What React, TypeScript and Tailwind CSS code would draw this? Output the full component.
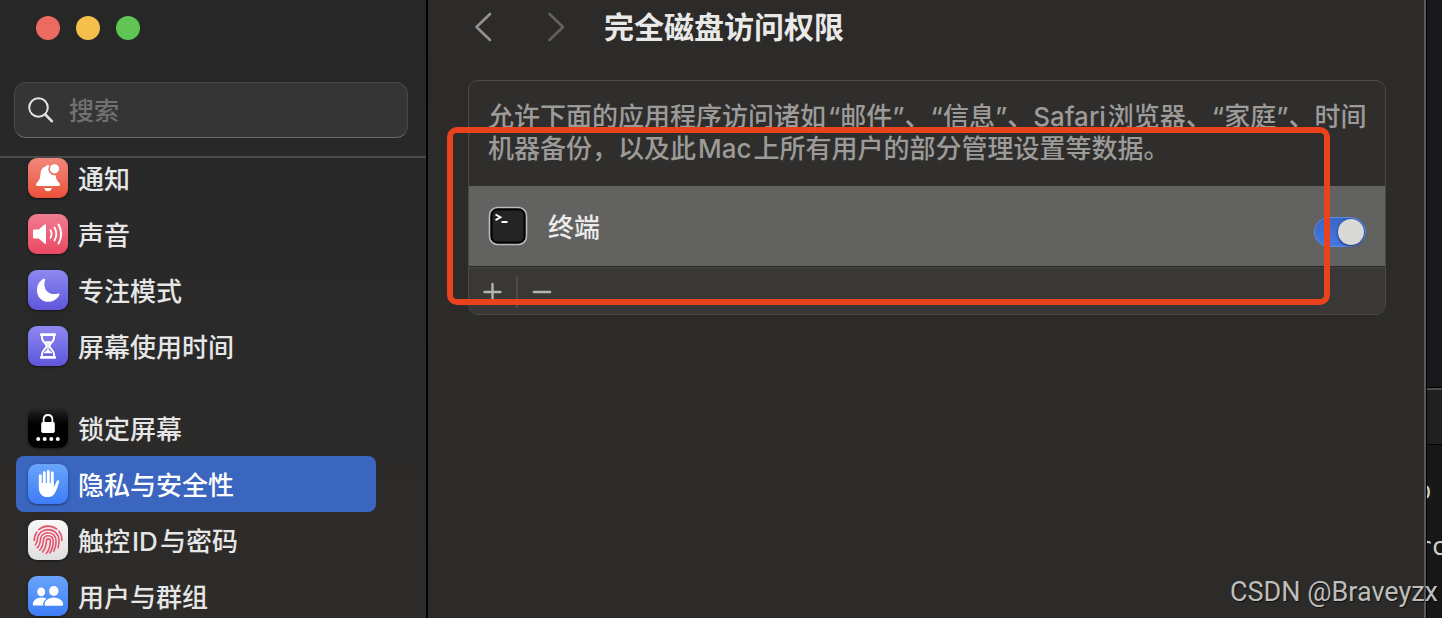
import { useState, type ReactNode } from "react";

type Item = { label: ReactNode; tile: string; icon: ReactNode; active?: boolean };

const BellIcon = () => (
  <svg viewBox="0 0 40 40" className="size-10" fill="white">
    <path d="M20 7c-.9 0-1.600.4-2 1.200-3.300.9-5.300 3.600-5.500 7.300-.2 4.500-.9 6.300-3.400 9-.7.8-1.100 1.400-1.100 2.100 0 .9.700 1.400 1.600 1.400h20.800c.9 0 1.600-.5 1.600-1.400 0-.7-.4-1.300-1.100-2.100-2.100-2.300-3-4-3.300-7.300a6.300 6.300 0 0 1-6.300-9.500A3 3 0 0 0 20 7z" />
    <path d="M16.200 30h7.600c-.3 2-1.800 3.300-3.800 3.300s-3.500-1.300-3.800-3.300z" />
    <circle cx="26.500" cy="10.800" r="4.600" />
  </svg>
);

const SpeakerIcon = () => (
  <svg viewBox="0 0 40 40" className="size-10" fill="none" stroke="white" strokeLinecap="round">
    <path
      d="M6.200 15.500h4.500l5.800-5c.8-.7 1.500-.3 1.500.6v17.800c0 .9-.7 1.300-1.500.6l-5.800-5H6.200c-.7 0-1.200-.5-1.200-1.200v-6.600c0-.7.5-1.200 1.200-1.200z"
      fill="white"
      stroke="none"
    />
    <path d="M22.500 16.200c1.300 2.300 1.300 5.300 0 7.600" strokeWidth="1.800" />
    <path d="M26.500 13.500c2.300 4 2.300 9 0 13" strokeWidth="1.900" />
    <path d="M30.500 10.500c3.500 5.700 3.500 13.300 0 19" strokeWidth="2" />
  </svg>
);

const MoonIcon = () => (
  <svg viewBox="0 0 40 40" className="size-10" fill="white">
    <path d="M15.800 8.800c.9-.4 1.600.2 1.300 1.200-.5 1.400-.7 2.700-.7 4.200 0 6 4 9.900 10 9.900 1.300 0 2.600-.2 3.800-.6 1-.3 1.600.4 1.200 1.300-1.900 4.300-6 7-11 7C13.800 31.800 9 27 9 20.200c0-5 2.600-9.400 6.800-11.400z" />
  </svg>
);

const HourglassIcon = () => (
  <svg viewBox="0 0 40 40" className="size-10" fill="none" stroke="white">
    <path d="M13.200 8.600h13.600M13.200 31.400h13.600" strokeWidth="2.800" strokeLinecap="round" />
    <path
      d="M14 9v3.200c0 3.300 4.600 5.200 4.600 7.800s-4.600 4.500-4.600 7.800V31h12v-3.200c0-3.300-4.600-5.200-4.600-7.800s4.600-4.500 4.600-7.800V9z"
      strokeWidth="2"
    />
    <path d="M16.800 15.200h6.400l-2.500 3.600v4.700l3.600 3.600v.2h-8.600v-.2l3.600-3.600v-4.700z" fill="white" stroke="none" />
  </svg>
);

const LockIcon = () => (
  <svg viewBox="0 0 40 40" className="size-10" fill="white">
    <path d="M15.600 15v-3.200c0-2.900 1.800-4.800 4.400-4.800s4.400 1.900 4.400 4.800V15" fill="none" stroke="white" strokeWidth="1.800" />
    <rect x="13.200" y="14" width="13.600" height="11" rx="1.800" />
    <circle cx="10.200" cy="31" r="2" />
    <circle cx="16.700" cy="31" r="2" />
    <circle cx="23.300" cy="31" r="2" />
    <circle cx="29.800" cy="31" r="2" />
  </svg>
);

const HandIcon = () => (
  <svg viewBox="0 0 40 40" className="size-10" fill="none" stroke="white" strokeWidth="2.900" strokeLinecap="round">
    <path d="M12.300 11.800v10M16.300 8.600V20M20.300 7.400V20M24.300 9V21" />
    <path
      d="M10.850 19h14.900v4.200c1-1.700 2-3.900 2.800-5.700.5-1.100 1.200-1.500 1.900-1.300.7.300.9 1 .6 2-.8 2.800-2.100 6.600-3.200 9-1.600 3.600-4 5.900-8 5.900-5.700 0-9-3.500-9-9.600z"
      fill="white"
      stroke="none"
    />
  </svg>
);

const FingerprintIcon = () => (
  <svg viewBox="0 0 40 40" className="size-10" fill="none" stroke="#e5506c" strokeWidth="1.600" strokeLinecap="round">
    <path d="M10.800 9.700A14 14 0 0 1 28.700 9" />
    <path d="M31 11.200A13.800 13.800 0 0 1 33.800 20.500" />
    <path d="M6.200 20.500A13.800 13.800 0 0 1 8.800 12" />
    <path d="M7.300 24.800c1.700-1.300 1.700-3.400 2-5.500C10 13.300 14.500 9.600 20 9.600c6.400 0 11 4.700 11 11.200 0 2.600-.3 4.700-.9 6.800" />
    <path d="M9.300 27.600c2.400-1.800 2.700-4.800 3-7.300.4-4.500 3.500-7.600 7.800-7.600 4.800 0 8 3.500 8 8.200 0 3.700-.8 7-2.300 10.200" />
    <path d="M11.800 30c2.500-2.300 3.200-5.500 3.500-9 .2-3.100 2.100-5.200 4.900-5.200 3 0 5 2.200 5 5.400 0 4.300-1.200 8.400-3.300 11.600" />
    <path d="M14.600 32c2.500-3 3.600-6.400 3.700-10.700 0-1.500.8-2.400 2-2.400 1.300 0 2.100 1 2.100 2.500-.1 4.600-1.600 9-4.200 12" />
  </svg>
);

const UsersIcon = () => (
  <svg viewBox="0 0 40 40" className="size-10" fill="white">
    <ellipse cx="13.200" cy="15.800" rx="4" ry="4.400" />
    <ellipse cx="25.800" cy="15" rx="4.700" ry="5" />
    <path d="M18.500 22.800c-2.300 1.500-3.400 3.700-3.400 5.400 0 .5.100.9.300 1.300H6.200c-.9 0-1.400-.5-1.400-1.300 0-2.900 3.200-6.700 8.400-6.700 2.100 0 3.900.5 5.300 1.300z" />
    <path d="M25.800 21.500c5.800 0 9.300 3.900 9.300 6.700 0 .9-.5 1.500-1.500 1.500H18c-1 0-1.500-.6-1.500-1.500 0-2.800 3.500-6.700 9.300-6.700z" />
  </svg>
);

const Latin = ({ children }: { children: string }) => <span className="mx-0.5">{children}</span>;

const groups: Item[][] = [
  [
    { label: "通知", tile: "from-[#f0877b] to-[#ea5039]", icon: <BellIcon /> },
    { label: "声音", tile: "from-[#ef7c92] to-[#e94661]", icon: <SpeakerIcon /> },
    { label: "专注模式", tile: "from-[#8f88f0] to-[#5f56dc]", icon: <MoonIcon /> },
    { label: "屏幕使用时间", tile: "from-[#8f88f0] to-[#5f56dc]", icon: <HourglassIcon /> },
  ],
  [
    { label: "锁定屏幕", tile: "from-[#282827] to-black to-60%", icon: <LockIcon /> },
    { label: "隐私与安全性", tile: "from-[#68a5fa] to-[#3f7cf8]", icon: <HandIcon />, active: true },
    {
      label: (
        <>
          触控<Latin>ID</Latin>与密码
        </>
      ),
      tile: "from-[#f8f8f8] to-[#dfdfdf]",
      icon: <FingerprintIcon />,
    },
    { label: "用户与群组", tile: "from-[#68a5fa] to-[#3f7cf8]", icon: <UsersIcon /> },
  ],
];

function Sidebar() {
  return (
    <aside className="flex w-[428px] shrink-0 flex-col overflow-hidden border-r-2 border-black bg-linear-to-b from-[#272727] via-[#292929] to-[#2e2c2a]">
      <header className="relative z-10 shrink-0 border-b-2 border-[#4b4a4a] px-3.5 pt-4 pb-[18px]">
        <div className="flex gap-4 pl-[22px]">
          <button aria-label="关闭" className="size-6 rounded-full bg-[#ec6b5f]" />
          <button aria-label="最小化" className="size-6 rounded-full bg-[#f4bf4b]" />
          <button aria-label="缩放" className="size-6 rounded-full bg-[#61c554]" />
        </div>
        <label className="mt-[42px] mr-1 flex h-14 items-center gap-3.5 rounded-xl border border-[#484848] border-b-[#6a6a6a] bg-[#353535] px-3">
          <svg viewBox="0 0 28 28" className="size-7 shrink-0" fill="none" stroke="#e2e2e2" strokeLinecap="round">
            <circle cx="11.500" cy="11.500" r="9.300" strokeWidth="2" />
            <path d="M18.300 18.500l6.500 6.700" strokeWidth="2.600" />
          </svg>
          <input
            type="search"
            aria-label="搜索"
            placeholder="搜索"
            className="min-w-0 flex-1 bg-transparent pt-1 text-[25px] font-medium text-white outline-none placeholder:text-[#717171]"
          />
        </label>
      </header>
      <nav className="-mt-2 flex flex-col gap-[26px] pr-[50px] pl-4">
        {groups.map((group, index) => (
          <ul key={index}>
            {group.map((item, row) => (
              <li key={row}>
                <a
                  href="#"
                  className={`flex h-14 items-center gap-2.5 rounded-lg px-3 text-[26px] font-medium ${
                    item.active ? "bg-[#3a66c0] text-white" : "text-[#e6e6e6]"
                  }`}
                >
                  <span
                    className={`flex size-10 shrink-0 items-center justify-center overflow-hidden rounded-[9px] bg-linear-to-b shadow-sm shadow-black/40 ${item.tile}`}
                  >
                    {item.icon}
                  </span>
                  <span className="pt-0.5">{item.label}</span>
                </a>
              </li>
            ))}
          </ul>
        ))}
      </nav>
    </aside>
  );
}

function AccessPanel() {
  const [enabled, setEnabled] = useState(true);
  return (
    <section className="relative rounded-[10px] border border-[#4b4a48] bg-[#2f2e2c]">
      <p className="pt-5 pr-4 pb-[21px] pl-[19px] text-[26px] leading-8 font-medium text-[#9c9b99]">
        允许下面的应用程序访问诸如<span className="ml-0.5">“邮件”</span>、“信息”、<span className="mr-0.5">Safari</span>
        浏览器、“家庭”、时间
        <br />
        机器备份，以及此<Latin>Mac</Latin>上所有用户的部分管理设置等数据。
      </p>
      <div className="flex h-[81px] items-center border-b border-[#2b2a29] bg-[#626260] px-[19px]">
        <svg viewBox="0 0 40 40" className="size-10" fill="none">
          <rect x="1.500" y="1.500" width="37" height="37" rx="8" fill="#000" stroke="#b5bcc0" strokeWidth="1.600" />
          <rect x="4.500" y="4.500" width="31" height="31" rx="5" fill="#242424" />
          <path d="M7.500 8.500l5 2.800-5 2.800" stroke="white" strokeWidth="1.800" />
          <path d="M13.500 16h6" stroke="white" strokeWidth="2" />
        </svg>
        <label htmlFor="terminal-access" className="ml-5 pt-0.5 text-[26px] font-medium text-[#ececec]">
          终端
        </label>
        <span className="mt-3 ml-auto flex">
          <input
            id="terminal-access"
            type="checkbox"
            role="switch"
            checked={enabled}
            onChange={(event) => setEnabled(event.target.checked)}
            className="flex h-[30px] w-[52px] appearance-none items-center rounded-full border border-[#5a8ae6] bg-[#777] px-px before:size-[26px] before:rounded-full before:bg-[#d9d9d8] before:shadow before:shadow-black/50 checked:justify-end checked:bg-linear-to-b checked:from-[#3767c6] checked:to-[#4478e2]"
          />
        </span>
      </div>
      <div className="flex h-[47px] items-center rounded-b-[9px] border-t-2 border-[#403f3d] bg-[#393836] text-[#b4b3b1]">
        <button aria-label="添加" className="flex h-8 w-[49px] items-center justify-center border-r-2 border-[#4d4c4a]">
          <svg viewBox="0 0 20 20" className="size-5" stroke="currentColor" strokeWidth="2.400" strokeLinecap="round">
            <path d="M1.500 10h16M9.500 2v16" />
          </svg>
        </button>
        <button aria-label="移除" className="flex h-8 w-12 items-center justify-center">
          <svg viewBox="0 0 20 20" className="size-5" stroke="currentColor" strokeWidth="2.600" strokeLinecap="round">
            <path d="M2 10h16" />
          </svg>
        </button>
      </div>
      <div className="pointer-events-none absolute top-[46px] right-[55px] bottom-[9px] -left-[22px] rounded-[10px] border-6 border-[#ea421c]" />
    </section>
  );
}

export default function App() {
  return (
    <div className="relative flex h-screen overflow-hidden bg-[#171717] font-[Inter,'Noto_Sans_CJK_SC',sans-serif]">
      <Sidebar />
      <main className="min-w-0 flex-1 border-r-2 border-[#5a5957] bg-[#2c2b29] pr-[38px] pl-10">
        <header className="flex h-20 items-start pt-2">
          <button aria-label="后退" className="mt-1 flex size-8 items-center">
            <svg viewBox="0 0 32 32" className="size-8" fill="none" stroke="#939291" strokeWidth="2.600" strokeLinecap="round" strokeLinejoin="round">
              <path d="M22 2L8.500 15L22 28" />
            </svg>
          </button>
          <button aria-label="前进" className="mt-1 ml-10 flex size-8 items-center">
            <svg viewBox="0 0 32 32" className="size-8" fill="none" stroke="#62615f" strokeWidth="2.600" strokeLinecap="round" strokeLinejoin="round">
              <path d="M9.500 2L23 15L9.500 28" />
            </svg>
          </button>
          <h1 className="ml-8 text-[30px] leading-[38px] font-bold text-[#e9e9e8]">完全磁盘访问权限</h1>
        </header>
        <AccessPanel />
      </main>
      <div className="flex w-4 shrink-0 flex-col overflow-hidden border-l border-black font-['DejaVu_Sans_Mono',monospace] text-[24px] text-[#d0d0d0]">
        <div className="h-[388px] shrink-0 border-b border-black bg-[#17181b]" />
        <div className="h-[57px] shrink-0 border-t-2 border-b border-t-[#4d4d4b] border-b-black bg-[#20201e]" />
        <div className="-ml-2.5 flex flex-col gap-7 pt-8 leading-7">
          <span>o</span>
          <span>rc</span>
        </div>
      </div>
      <p className="absolute right-1 bottom-2 font-[Roboto,sans-serif] text-[27px] leading-9 text-[#bdbdbc] [text-shadow:1px_1px_1px_#000a]">
        CSDN @Braveyzx
      </p>
    </div>
  );
}
